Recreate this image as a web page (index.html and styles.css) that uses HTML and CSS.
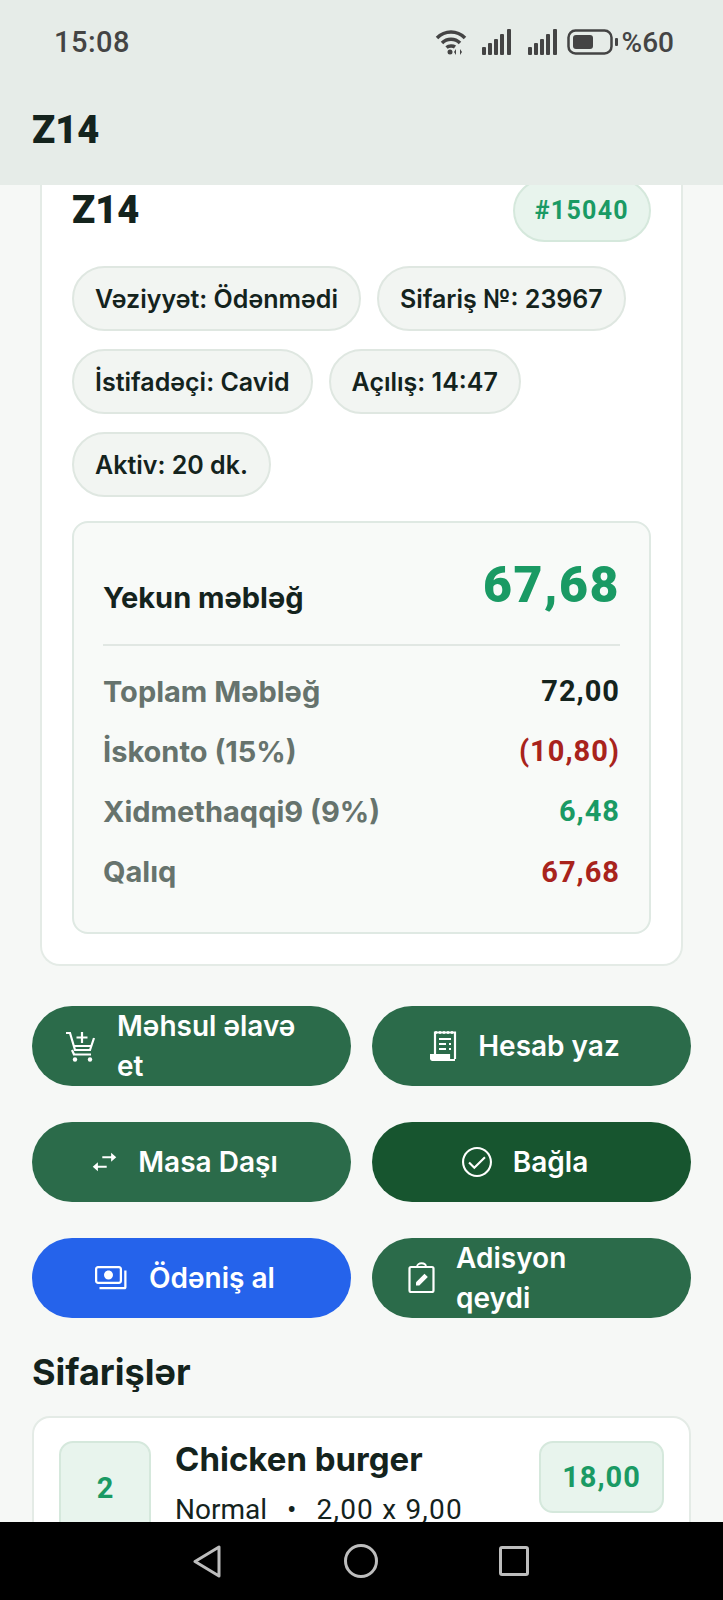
FILE: index.html
```html
<!DOCTYPE html>
<html lang="en">
<head>
    <meta charset="UTF-8">
    <meta name="viewport" content="width=device-width, initial-scale=1.0">
    <title>Z14</title>
    <link rel="stylesheet" href="styles.css">
</head>
<body>
    <div class="screen">
        <header class="top">
            <div class="status">
                <span class="clock">15:08</span>
                <div class="status-icons">
                    <svg class="ic-wifi" viewBox="0 0 32 26" fill="none" stroke="#444" stroke-width="3.500">
                        <path d="M2 9C10 1 22 1 30 9"/>
                        <path d="M7 14C12 9 20 9 25 14"/>
                        <path d="M11.500 18.500C14 16.500 18 16.500 20 18"/>
                        <circle cx="15" cy="23" r="2.500" fill="#444" stroke="none"/>
                        <path d="M21 20v6l-2-3zM25 20v6l2-3z" fill="#444" stroke="none"/>
                    </svg>
                    <svg class="ic-signal" viewBox="0 0 29 26" fill="#444">
                        <rect x="0" y="18" width="4" height="8" rx="1"/>
                        <rect x="6" y="14" width="4" height="12" rx="1"/>
                        <rect x="12" y="10" width="4" height="16" rx="1"/>
                        <rect x="18" y="5" width="4" height="21" rx="1"/>
                        <rect x="25" y="0" width="4" height="26" rx="1"/>
                    </svg>
                    <svg class="ic-signal second" viewBox="0 0 29 26" fill="#444">
                        <rect x="0" y="18" width="4" height="8" rx="1"/>
                        <rect x="6" y="14" width="4" height="12" rx="1"/>
                        <rect x="12" y="10" width="4" height="16" rx="1"/>
                        <rect x="18" y="5" width="4" height="21" rx="1"/>
                        <rect x="25" y="0" width="4" height="26" rx="1"/>
                    </svg>
                    <svg class="ic-battery" viewBox="0 0 51 26" fill="none">
                        <rect x="1.500" y="1.500" width="43" height="23" rx="7" stroke="#444" stroke-width="2.500"/>
                        <rect x="6" y="6" width="20" height="14" rx="3" fill="#444"/>
                        <rect x="48" y="9" width="3" height="8" rx="1" fill="#444"/>
                    </svg>
                    <span class="percent">%60</span>
                </div>
            </div>
            <div class="appbar">Z14</div>
        </header>

        <main class="content">
            <section class="card">
                <div class="card-head">
                    <h1 class="table-name">Z14</h1>
                    <span class="badge">#15040</span>
                </div>
                <div class="chips">
                    <span class="chip">Vəziyyət: Ödənmədi</span>
                    <span class="chip">Sifariş №: 23967</span>
                    <span class="chip">İstifadəçi: Cavid</span>
                    <span class="chip">Açılış: 14:47</span>
                    <span class="chip">Aktiv: 20 dk.</span>
                </div>
                <div class="summary">
                    <div class="total-row">
                        <span class="total-label">Yekun məbləğ</span>
                        <span class="total-value">67,68</span>
                    </div>
                    <div class="row"><span>Toplam Məbləğ</span><b class="num">72,00</b></div>
                    <div class="row"><span>İskonto (15%)</span><b class="num red">(10,80)</b></div>
                    <div class="row"><span>Xidmethaqqi9 (9%)</span><b class="num green">6,48</b></div>
                    <div class="row"><span>Qalıq</span><b class="num red">67,68</b></div>
                </div>
            </section>

            <div class="actions">
                <button class="btn btn-wrap">
                    <svg class="icon icon-cart" viewBox="0 0 30 32" fill="none" stroke="#fff" stroke-width="2.200">
                        <path d="M0 3h4l5 17h15l4-12"/>
                        <path d="M7 24.500h18"/>
                        <path d="M6 20l2 4.500"/>
                        <path d="M16 2v11M10.500 7.500h11"/>
                        <path d="M7 16h19"/>
                        <circle cx="9" cy="29.500" r="2.200" fill="#fff" stroke="none"/>
                        <circle cx="24" cy="29.500" r="2.200" fill="#fff" stroke="none"/>
                    </svg>
                    <span>Məhsul əlavə<br>et</span>
                </button>
                <button class="btn">
                    <svg class="icon icon-bill" viewBox="0 0 27 31" fill="none" stroke="#fff" stroke-width="2.200">
                        <path d="M5 24V2.500h20V29"/>
                        <path d="M6 1v3M10 1v3M14 1v3M18 1v3M22 1v3" stroke-width="1.500"/>
                        <path d="M9 9h12M9 14h7M19 14h2M9 19h7M19 19h2"/>
                        <path d="M1 25h18v5H3a2 2 0 0 1-2-2z" fill="#fff"/>
                        <path d="M19 30h6"/>
                    </svg>
                    <span>Hesab yaz</span>
                </button>
                <button class="btn">
                    <svg class="icon icon-swap" viewBox="4 5.500 17 13.500" fill="#fff">
                        <path d="M8 12.500l-3.500 3 3.500 3v-2.300h6v-1.400H8zM20.500 9L17 6v2.300h-6v1.400h6V12z"/>
                    </svg>
                    <span>Masa Daşı</span>
                </button>
                <button class="btn btn-dark">
                    <svg class="icon icon-check" viewBox="2 2 20 20" fill="#fff">
                        <path d="M12 2C6.480 2 2 6.480 2 12s4.480 10 10 10 10-4.480 10-10S17.520 2 12 2zm0 18.600c-4.740 0-8.600-3.860-8.600-8.600S7.260 3.400 12 3.400s8.600 3.860 8.600 8.600-3.860 8.600-8.600 8.600zm4.800-12.300L10.200 14.900l-3-3-1 1 4 4 7.600-7.600z"/>
                    </svg>
                    <span>Bağla</span>
                </button>
                <button class="btn btn-blue">
                    <svg class="icon icon-pay" viewBox="1 4 22 16" fill="#fff">
                        <path d="M19 14V6c0-1.100-.9-2-2-2H3c-1.100 0-2 .9-2 2v8c0 1.100.9 2 2 2h14c1.100 0 2-.9 2-2zm-1.500 0c0 .3-.2.500-.5.500H3c-.3 0-.5-.2-.5-.5V6c0-.3.2-.5.500-.5h14c.3 0 .5.200.5.500v8zM10 7c-1.660 0-3 1.340-3 3s1.340 3 3 3 3-1.340 3-3-1.340-3-3-3zm12 0v11c0 1.100-.4 1.500-1.500 1.500H4V18h16.500V7H22z"/>
                    </svg>
                    <span>Ödəniş al</span>
                </button>
                <button class="btn btn-wrap">
                    <svg class="icon icon-note" viewBox="0 0 27 31" fill="none" stroke="#fff" stroke-width="2.200">
                        <rect x="1.500" y="5" width="24" height="25" rx="1.500"/>
                        <path d="M9 5c0-5 9-5 9 0" stroke-width="1.800"/>
                        <path d="M8 23.500v-3.300l8.500-8.500 3.300 3.300-8.500 8.500z" fill="#fff" stroke="none"/>
                    </svg>
                    <span>Adisyon<br>qeydi</span>
                </button>
            </div>

            <h2 class="section-title">Sifarişlər</h2>

            <article class="order">
                <div class="qty">2</div>
                <div class="order-info">
                    <div class="order-name">Chicken burger</div>
                    <div class="order-meta">Normal<i>•</i><span>2,00 x 9,00</span></div>
                </div>
                <div class="price">18,00</div>
            </article>
        </main>

        <nav class="navbar">
            <svg class="nav-back" viewBox="0 0 28 33" fill="none" stroke="#bdbdbd" stroke-width="3" stroke-linejoin="round">
                <path d="M26 2v29L2 16.500z"/>
            </svg>
            <svg class="nav-home" viewBox="0 0 34 34" fill="none" stroke="#bdbdbd" stroke-width="3">
                <circle cx="17" cy="17" r="15.500"/>
            </svg>
            <svg class="nav-recent" viewBox="0 0 30 30" fill="none" stroke="#bdbdbd" stroke-width="3">
                <rect x="1.500" y="1.500" width="27" height="27" rx="1.500"/>
            </svg>
        </nav>
    </div>
</body>
</html>
```

FILE: styles.css
```css
* {
    box-sizing: border-box;
}

body {
    margin: 0;
    font-family: "Inter", "Roboto", sans-serif;
    color: #14231d;
    background: #f6f8f6;
}

.screen {
    display: flex;
    flex-direction: column;
    width: 723px;
    height: 1600px;
    overflow: hidden;
}

/* Status bar and app bar */
.top {
    flex: none;
    height: 185px;
    background: #e6ece8;
    position: relative;
    z-index: 2;
}

.status {
    display: flex;
    justify-content: space-between;
    align-items: center;
    height: 84px;
    padding: 0 49px 0 54px;
    color: #444;
    font-family: "Roboto", sans-serif;
    font-size: 28px;
    font-weight: 500;
}

.clock {
    font-size: 29px;
    letter-spacing: 0.500px;
}

.status-icons {
    display: flex;
    align-items: center;
}

.ic-wifi {
    width: 32px;
    height: 26px;
    margin-right: 15px;
}

.ic-signal {
    width: 29px;
    height: 26px;
    margin-right: 17px;
}

.ic-signal.second {
    margin-right: 10px;
}

.ic-battery {
    width: 51px;
    height: 26px;
    margin-right: 4px;
}

.appbar {
    padding: 22px 32px 0;
    font-family: "Roboto", sans-serif;
    font-size: 38px;
    font-weight: 900;
    line-height: 48px;
}

/* Scrolled content */
.content {
    flex: 1;
    min-height: 0;
    overflow: hidden;
    padding: 0 32px;
}

.card {
    margin: -6px 8px 0;
    padding: 0 30px 30px;
    background: #fff;
    border: 2px solid #e4ebe6;
    border-top: none;
    border-radius: 0 0 20px 20px;
}

.card-head {
    display: flex;
    justify-content: space-between;
    align-items: flex-start;
    height: 62px;
}

.table-name {
    margin: 0;
    font-family: "Roboto", sans-serif;
    font-size: 38px;
    font-weight: 900;
    line-height: 62px;
}

.badge {
    display: flex;
    align-items: center;
    height: 63px;
    padding: 0 20px;
    color: #1a9a64;
    font-family: "Roboto", sans-serif;
    font-size: 25px;
    font-weight: 700;
    letter-spacing: 1.300px;
    background: #e8f4ed;
    border: 2px solid #d5e8dc;
    border-radius: 32px;
}

.chips {
    display: flex;
    flex-wrap: wrap;
    gap: 18px 16px;
    margin-top: 25px;
}

.chip {
    display: flex;
    align-items: center;
    height: 65px;
    padding: 0 21px;
    font-size: 25px;
    font-weight: 600;
    background: #f2f5f2;
    border: 2px solid #dfe7e1;
    border-radius: 33px;
}

.summary {
    margin-top: 24px;
    padding: 0 29px 30px;
    background: #f8faf8;
    border: 2px solid #dfe9e3;
    border-radius: 16px;
}

.total-row {
    display: flex;
    justify-content: space-between;
    align-items: center;
    height: 123px;
    border-bottom: 2px solid #e1e7e3;
    margin-bottom: 15px;
}

.total-label {
    margin-top: 27px;
    font-size: 29px;
    font-weight: 700;
}

.total-value {
    margin-top: 2px;
    color: #1a9a64;
    font-family: "Roboto", sans-serif;
    font-size: 50px;
    font-weight: 900;
    letter-spacing: 1.500px;
}

.row {
    display: flex;
    justify-content: space-between;
    align-items: center;
    height: 60.200px;
    color: #66736d;
    font-size: 29px;
    font-weight: 700;
}

.num {
    color: #14231d;
    font-family: "Roboto", sans-serif;
    font-size: 29px;
    font-weight: 700;
    letter-spacing: 1px;
}

.red {
    color: #a8231c;
}

.green {
    color: #1a9a64;
}

/* Action buttons */
.actions {
    display: grid;
    grid-template-columns: 1fr 1fr;
    gap: 36px 21px;
    margin-top: 40px;
}

.btn {
    display: flex;
    justify-content: center;
    align-items: center;
    gap: 21px;
    height: 80px;
    padding: 0 47px 0 34px;
    overflow: hidden;
    color: #fff;
    font-family: inherit;
    font-size: 28px;
    font-weight: 600;
    line-height: 40px;
    text-align: left;
    background: #2b6b4a;
    border: none;
    border-radius: 40px;
}

.btn-wrap {
    justify-content: flex-start;
}

.btn-dark {
    background: #17552f;
}

.btn-blue {
    background: #2563eb;
}

.icon {
    flex: none;
}

.icon-cart {
    width: 30px;
    height: 32px;
}

.icon-bill {
    width: 27px;
    height: 31px;
}

.icon-swap {
    width: 25px;
    height: 20px;
}

.icon-check {
    width: 30px;
    height: 30px;
}

.icon-pay {
    width: 33px;
    height: 24px;
}

.icon-note {
    width: 27px;
    height: 31px;
    margin-left: 2px;
}

.section-title {
    margin: 30px 0 0;
    font-size: 36px;
    font-weight: 700;
    line-height: 48px;
}

/* Order item */
.order {
    display: flex;
    align-items: flex-start;
    height: 180px;
    margin-top: 20px;
    padding: 23px 25px;
    background: #fff;
    border: 2px solid #e4ebe6;
    border-radius: 18px;
}

.qty {
    display: flex;
    flex: none;
    justify-content: center;
    align-items: center;
    width: 92px;
    height: 94px;
    color: #1a9a64;
    font-family: "Roboto", sans-serif;
    font-size: 29px;
    font-weight: 700;
    background: #e8f4ed;
    border: 2px solid #d5e8dc;
    border-radius: 14px;
}

.order-info {
    flex: 1;
    margin-top: -2px;
    margin-left: 24px;
}

.order-name {
    font-size: 33px;
    font-weight: 700;
    line-height: 40px;
}

.order-meta {
    margin-top: 13px;
    font-family: "Roboto", sans-serif;
    font-size: 28px;
    line-height: 36px;
}

.order-meta i {
    margin: 0 20px;
    font-style: normal;
}

.order-meta span {
    letter-spacing: 1.200px;
}

.price {
    display: flex;
    flex: none;
    justify-content: center;
    align-items: center;
    width: 125px;
    height: 72px;
    color: #1a9a64;
    font-family: "Roboto", sans-serif;
    font-size: 29px;
    font-weight: 700;
    letter-spacing: 1px;
    background: #e8f4ed;
    border: 2px solid #d5e8dc;
    border-radius: 14px;
}

/* Android navigation bar */
.navbar {
    display: flex;
    flex: none;
    align-items: center;
    height: 78px;
    padding-left: 193px;
    background: #000;
    position: relative;
    z-index: 2;
}

.nav-back {
    width: 28px;
    height: 33px;
}

.nav-home {
    width: 34px;
    height: 34px;
    margin-left: 123px;
}

.nav-recent {
    width: 30px;
    height: 30px;
    margin-left: 121px;
}
```
